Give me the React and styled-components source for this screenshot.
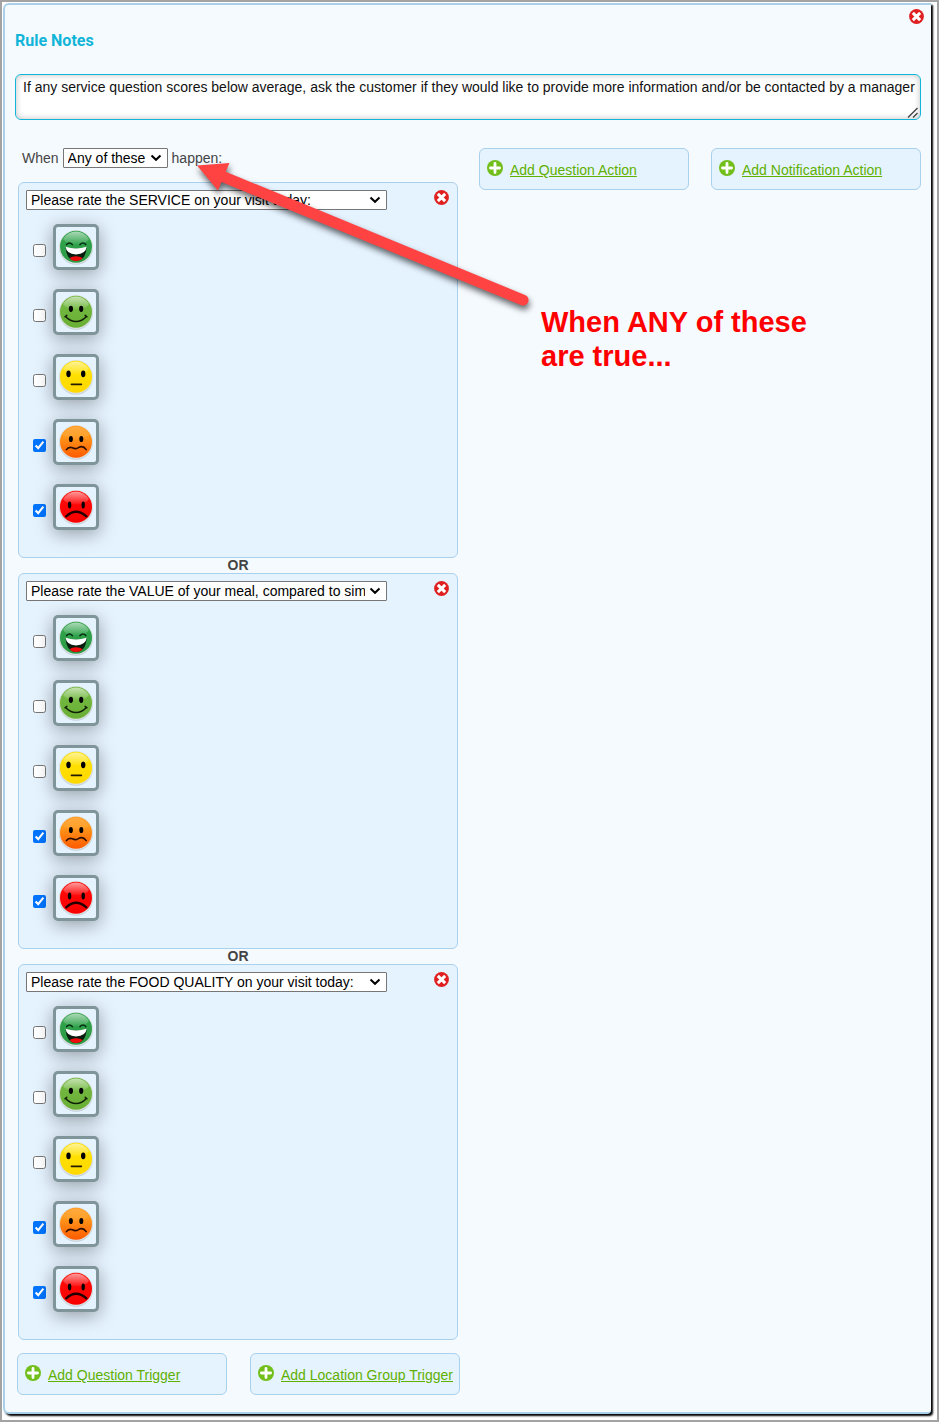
import React from 'react';
import styled, { createGlobalStyle } from 'styled-components';

const GlobalStyle = createGlobalStyle`
  * {
    box-sizing: border-box;
  }
  body {
    margin: 0;
    background: #fff;
    color: #444;
    font-family: 'Liberation Sans', Arial, sans-serif;
    font-size: 14px;
  }
`;

const chevron =
  "data:image/svg+xml,%3Csvg xmlns='http://www.w3.org/2000/svg' width='12' height='8' fill='none' stroke='black' stroke-width='2'%3E%3Cpath d='M1.5 1.5L6 5.8L10.5 1.5'/%3E%3C/svg%3E";
const grip =
  "data:image/svg+xml,%3Csvg xmlns='http://www.w3.org/2000/svg' width='15' height='15' stroke='%23444' stroke-width='1.4'%3E%3Cpath d='M3 13.5L12.5 4M8 13.5L12.5 9'/%3E%3C/svg%3E";

const questions = [
  'Please rate the SERVICE on your visit today:',
  'Please rate the VALUE of your meal, compared to similar restaurants:',
  'Please rate the FOOD QUALITY on your visit today:',
];

const ratings = [
  { mood: 'great', label: 'Great', checked: false },
  { mood: 'good', label: 'Good', checked: false },
  { mood: 'okay', label: 'Okay', checked: false },
  { mood: 'poor', label: 'Poor', checked: true },
  { mood: 'bad', label: 'Bad', checked: true },
];

const faceColors = {
  great: ['#2fa24a', '#2d9a45'],
  good: ['#72b840', '#69ae35'],
  okay: ['#ffe100', '#ffd800'],
  poor: ['#ff9a1c', '#ff5a00'],
  bad: ['#ff0808', '#f90000'],
};

const RemoveIcon = () => (
  <svg width="15" height="15" viewBox="0 0 15 15" aria-hidden="true">
    <circle cx="7.5" cy="7.5" r="7.4" fill="#e02020" />
    <path
      d="M4.9 4.9 L10.1 10.1 M10.1 4.9 L4.9 10.1"
      stroke="#fff"
      strokeWidth="3"
      strokeLinecap="square"
    />
  </svg>
);

const PlusIcon = () => (
  <svg width="16" height="16" viewBox="0 0 16 16" aria-hidden="true">
    <circle cx="8" cy="8" r="8" fill="#72bf1c" />
    <path d="M8 3.4 V12.6 M3.4 8 H12.6" stroke="#fff" strokeWidth="2.8" strokeLinecap="round" />
  </svg>
);

const Face = ({ mood, id }) => {
  const [top, bottom] = faceColors[mood];
  return (
    <svg width="36" height="36" viewBox="0 0 36 36" aria-hidden="true">
      <defs>
        <linearGradient id={`${id}-fill`} x1="0" y1="0" x2="0" y2="1">
          <stop offset="0.3" stopColor={top} />
          <stop offset="1" stopColor={bottom} />
        </linearGradient>
        <linearGradient id={`${id}-shine`} x1="0" y1="0" x2="0" y2="1">
          <stop offset="0" stopColor="#fff" stopOpacity={mood === 'poor' ? 0.15 : 0.6} />
          <stop offset="1" stopColor="#fff" stopOpacity="0.04" />
        </linearGradient>
      </defs>
      <circle cx="18" cy="18.8" r="17" fill="#9aa8b0" opacity="0.45" />
      <circle cx="18" cy="18" r="16.9" fill="#dde1e2" />
      <circle cx="18" cy="17.8" r="16" fill={`url(#${id}-fill)`} />
      <path d="M5 10 Q10 2.4 18 2.4 T31 10 Q28 15 18 15.5 Q8 15 5 10Z" fill={`url(#${id}-shine)`} />
      {mood === 'great' && (
        <>
          <path
            d="M8.6 15.6 Q11.4 12.6 14.3 15.6 M22 15.6 Q25 12.6 27.8 15.6"
            fill="none"
            stroke="#062b10"
            strokeWidth="1.5"
            strokeLinecap="round"
          />
          <path d="M7.6 18.2 Q18 21.4 28.6 18.2 Q28 31.4 18 31.9 Q8.4 31.4 7.6 18.2Z" fill="#0a1c0d" />
          <path d="M7.6 17.8 Q18 21.4 28.6 17.8 Q28 25 18 25.6 Q8.4 25 7.6 17.8Z" fill="#fff" />
          <path d="M11.6 29 Q14 27.2 18 27.2 T24.6 29 Q22.4 32 18 32 T11.6 29Z" fill="#f00c0c" />
        </>
      )}
      {mood === 'good' && (
        <>
          <ellipse cx="12.9" cy="14.8" rx="2.1" ry="3.1" />
          <ellipse cx="23.2" cy="14.8" rx="2.1" ry="3.1" />
          <path
            d="M7.7 22.5 Q12 27.6 18 27.6 T28.3 22.5 M7 22.8 L8.8 21.3 M27.2 21.3 L29 22.8"
            fill="none"
            stroke="#102006"
            strokeWidth="1.5"
            strokeLinecap="round"
          />
        </>
      )}
      {mood === 'okay' && (
        <>
          <ellipse cx="10.5" cy="14.8" rx="2.2" ry="3.4" />
          <ellipse cx="25.2" cy="14.8" rx="2.2" ry="3.4" />
          <path d="M13.4 25.4 H23.4" stroke="#221c00" strokeWidth="1.6" strokeLinecap="round" />
        </>
      )}
      {mood === 'poor' && (
        <>
          <ellipse cx="12.9" cy="15" rx="2" ry="3.1" />
          <ellipse cx="23.3" cy="15" rx="2" ry="3.1" />
          <path
            d="M8.4 25.6 Q10.6 22.4 14.4 23.8 Q17.6 25.6 20.4 23.6 Q25 21 28.2 25.6"
            fill="none"
            stroke="#2b0d00"
            strokeWidth="1.6"
            strokeLinecap="round"
          />
        </>
      )}
      {mood === 'bad' && (
        <>
          <ellipse cx="11.6" cy="16" rx="1.7" ry="3.4" />
          <ellipse cx="25.2" cy="16" rx="1.7" ry="3.4" />
          <path
            d="M8.2 27.4 Q18 18.2 28.4 27.4"
            fill="none"
            stroke="#200"
            strokeWidth="2.3"
            strokeLinecap="round"
          />
        </>
      )}
    </svg>
  );
};

const Trigger = ({ question, index }) => (
  <TriggerBox>
    <TriggerHead>
      <Select $fill defaultValue={question} aria-label="Question">
        {questions.map((q) => (
          <option key={q}>{q}</option>
        ))}
      </Select>
      <IconButton type="button" aria-label="Remove trigger">
        <RemoveIcon />
      </IconButton>
    </TriggerHead>
    <RatingList>
      {ratings.map(({ mood, label, checked }) => (
        <Rating key={mood}>
          <Check type="checkbox" defaultChecked={checked} aria-label={label} />
          <Tile>
            <Face mood={mood} id={`face-${index}-${mood}`} />
          </Tile>
        </Rating>
      ))}
    </RatingList>
  </TriggerBox>
);

const AddLink = ({ children }) => (
  <AddBox>
    <PlusIcon />
    <a href="#add">{children}</a>
  </AddBox>
);

const App = () => (
  <>
    <GlobalStyle />
    <Frame>
      <Panel>
        <TopBar>
          <IconButton type="button" aria-label="Remove rule">
            <RemoveIcon />
          </IconButton>
        </TopBar>
        <Content>
          <Title htmlFor="rule-notes">Rule Notes</Title>
          <Notes
            id="rule-notes"
            defaultValue="If any service question scores below average, ask the customer if they would like to provide more information and/or be contacted by a manager"
          />
          <Columns>
            <div>
              <Condition>
                <label htmlFor="match">When</label>
                <Select id="match" defaultValue="Any of these">
                  <option>Any of these</option>
                  <option>All of these</option>
                </Select>
                <span>happen:</span>
              </Condition>
              <Triggers>
                {questions.map((question, i) => (
                  <React.Fragment key={question}>
                    {i > 0 && <Or>OR</Or>}
                    <Trigger question={question} index={i} />
                  </React.Fragment>
                ))}
              </Triggers>
              <AddTriggers>
                <AddLink>Add Question Trigger</AddLink>
                <AddLink>Add Location Group Trigger</AddLink>
              </AddTriggers>
            </div>
            <div>
              <AddActions>
                <AddLink>Add Question Action</AddLink>
                <AddLink>Add Notification Action</AddLink>
              </AddActions>
              <Callout>
                When ANY of these
                <br />
                are true...
              </Callout>
            </div>
          </Columns>
        </Content>
      </Panel>
      <Arrow width="350" height="160" viewBox="190 155 350 160" aria-hidden="true">
        <path d="M197 165.5 L229.5 163 L225.7 171.7 L525 295 A5.4 5.4 0 0 1 521.3 305.2 L221.5 182 L218 190.5Z" />
      </Arrow>
    </Frame>
  </>
);

const Frame = styled.div`
  position: relative;
  margin: 0 6px 6px 0;
  padding: 1px 6px 6px 1px;
  border: 2px solid #a3a3a3;
`;

const Panel = styled.section`
  padding: 4px 7px 17px 10px;
  background: #f5faff;
  border: 2px solid #a9d0e8;
  border-right: 0;
  border-radius: 6px 0 4px 6px;
  box-shadow: 2px 2px 2px #000;
`;

const TopBar = styled.div`
  display: flex;
  justify-content: flex-end;
`;

const IconButton = styled.button`
  display: flex;
  flex: none;
  padding: 0;
  border: 0;
  background: none;
  cursor: pointer;
`;

const Content = styled.div`
  padding-right: 3px;
`;

const Title = styled.label`
  display: block;
  margin: 7px 0 23px;
  color: #12b5d8;
  font-family: Roboto, sans-serif;
  font-size: 16px;
  font-weight: 700;
  line-height: 20px;
`;

const Notes = styled.textarea`
  display: block;
  width: 100%;
  height: 46px;
  padding: 4px 4px 4px 7px;
  border: 1px solid #12b5d8;
  border-radius: 6px;
  background: #fff;
  box-shadow: inset 0 0 6px rgba(0, 0, 0, 0.25);
  color: #111;
  font: 14px/16px 'Liberation Sans', Arial, sans-serif;
  overflow: hidden;
  resize: vertical;

  &::-webkit-resizer {
    background: url("${grip}") no-repeat;
  }
`;

const Columns = styled.div`
  display: grid;
  grid-template-columns: minmax(0, 464fr) minmax(0, 442fr);
  margin-top: 28px;
`;

const Condition = styled.div`
  display: flex;
  align-items: center;
  gap: 4px;
  padding-left: 7px;
  line-height: 20px;
`;

const Select = styled.select`
  flex: ${(props) => (props.$fill ? '0 1 361px' : 'none')};
  min-width: 0;
  height: 20px;
  padding: 0 21px 0 4px;
  border: 1px solid #767676;
  border-radius: 1px;
  background: #fff url("${chevron}") no-repeat right 5px center;
  color: #000;
  font: 14px 'Liberation Sans', Arial, sans-serif;
  appearance: none;
`;

const Triggers = styled.div`
  padding: 14px 21px 0 3px;
`;

const TriggerBox = styled.div`
  padding: 7px 8px 27px 7px;
  border: 1px solid #a9d0ec;
  border-radius: 6px;
  background: #e5f3ff;
`;

const TriggerHead = styled.div`
  display: flex;
  justify-content: space-between;
  align-items: flex-start;
  gap: 8px;
`;

const RatingList = styled.div`
  display: flex;
  flex-direction: column;
  gap: 19px;
  padding: 14px 0 0 7px;
`;

const Rating = styled.label`
  display: flex;
  align-items: center;
  gap: 7px;
`;

const Check = styled.input`
  width: 13px;
  height: 13px;
  margin: 6px 0 0;
`;

const Tile = styled.span`
  display: flex;
  align-items: center;
  justify-content: center;
  width: 46px;
  height: 46px;
  border: 3px solid #7f9599;
  border-radius: 5px;
  background: #e5f3ff;
  box-shadow: 0 4px 18px rgba(0, 0, 0, 0.35);
`;

const Or = styled.div`
  font-weight: 700;
  line-height: 15px;
  text-align: center;
`;

const AddRow = styled.div`
  display: grid;
  grid-template-columns: 1fr 1fr;
`;

const AddTriggers = styled(AddRow)`
  gap: 23px;
  padding: 13px 19px 0 2px;
`;

const AddActions = styled(AddRow)`
  gap: 22px;
`;

const AddBox = styled.div`
  display: flex;
  gap: 7px;
  min-height: 42px;
  padding: 11px 0 0 7px;
  border: 1px solid #a9d0ec;
  border-radius: 6px;
  background: #e5f3ff;
  white-space: nowrap;

  svg {
    flex: none;
  }
  a {
    color: #5fb000;
    line-height: 20px;
  }
`;

const Callout = styled.p`
  margin: 115px 0 0 62px;
  color: #f00;
  font-size: 29px;
  font-weight: 700;
  line-height: 34px;
`;

/* sits on top of the form, from the callout to the condition row */
const Arrow = styled.svg`
  position: absolute;
  left: 188px;
  top: 153px;
  fill: #ff4343;
  filter: drop-shadow(1px 4px 3px rgba(0, 0, 0, 0.6));
  pointer-events: none;
`;

export default App;
